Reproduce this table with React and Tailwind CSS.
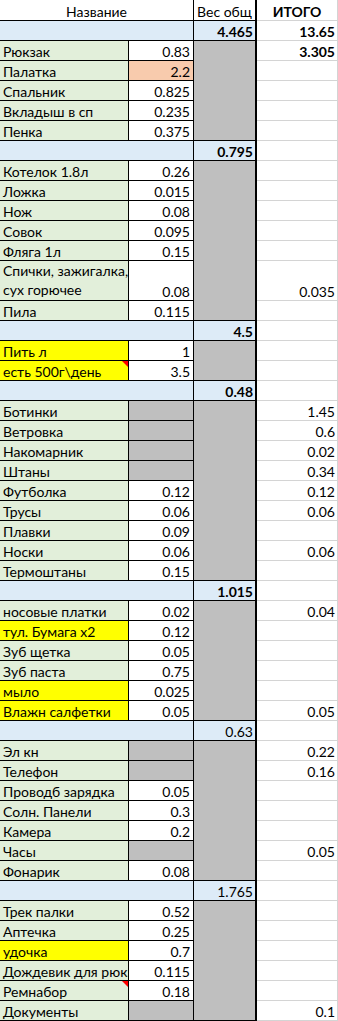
const nameBg = {
  green: "bg-[#e2efda]",
  yellow: "bg-[#ffff00]",
};

const weightBg = {
  white: "bg-white",
  gray: "bg-[#bfbfbf]",
  orange: "bg-[#f8cbad]",
};

const spans = {
  2: "row-span-2",
  5: "row-span-5",
  6: "row-span-6",
  7: "row-span-7",
  8: "row-span-8",
  9: "row-span-9",
};

const groups = [
  {
    total: "4.465",
    bold: true,
    sum: "13.65",
    items: [
      { name: "Рюкзак", w: "0.83", d: "3.305", dBold: true },
      { name: "Палатка", w: "2.2", wb: "orange" },
      { name: "Спальник", w: "0.825" },
      { name: "Вкладыш в сп", w: "0.235" },
      { name: "Пенка", w: "0.375" },
    ],
  },
  {
    total: "0.795",
    bold: true,
    items: [
      { name: "Котелок 1.8л", w: "0.26" },
      { name: "Ложка", w: "0.015" },
      { name: "Нож", w: "0.08" },
      { name: "Совок", w: "0.095" },
      { name: "Фляга 1л", w: "0.15" },
      { name: ["Спички, зажигалка,", "сух горючее"], w: "0.08", d: "0.035", tall: true },
      { name: "Пила", w: "0.115" },
    ],
  },
  {
    total: "4.5",
    bold: true,
    items: [
      { name: "Пить л", w: "1", nb: "yellow" },
      { name: "есть 500г\\день", w: "3.5", nb: "yellow", note: true },
    ],
  },
  {
    total: "0.48",
    bold: true,
    items: [
      { name: "Ботинки", wb: "gray", d: "1.45" },
      { name: "Ветровка", wb: "gray", d: "0.6" },
      { name: "Накомарник", wb: "gray", d: "0.02" },
      { name: "Штаны", wb: "gray", d: "0.34" },
      { name: "Футболка", w: "0.12", d: "0.12" },
      { name: "Трусы", w: "0.06", d: "0.06" },
      { name: "Плавки", w: "0.09" },
      { name: "Носки", w: "0.06", d: "0.06" },
      { name: "Термоштаны", w: "0.15" },
    ],
  },
  {
    total: "1.015",
    bold: true,
    items: [
      { name: "носовые платки", w: "0.02", d: "0.04" },
      { name: "тул. Бумага х2", w: "0.12", nb: "yellow" },
      { name: "Зуб щетка", w: "0.05" },
      { name: "Зуб паста", w: "0.75" },
      { name: "мыло", w: "0.025", nb: "yellow" },
      { name: "Влажн салфетки", w: "0.05", d: "0.05", nb: "yellow" },
    ],
  },
  {
    total: "0.63",
    items: [
      { name: "Эл кн", wb: "gray", d: "0.22" },
      { name: "Телефон", wb: "gray", d: "0.16" },
      { name: "Проводб зарядка", w: "0.05" },
      { name: "Солн. Панели", w: "0.3" },
      { name: "Камера", w: "0.2" },
      { name: "Часы", wb: "gray", d: "0.05" },
      { name: "Фонарик", w: "0.08" },
    ],
  },
  {
    total: "1.765",
    items: [
      { name: "Трек палки", w: "0.52" },
      { name: "Аптечка", w: "0.25" },
      { name: "удочка", w: "0.7", nb: "yellow" },
      { name: "Дождевик для рюкзака", w: "0.115" },
      { name: "Ремнабор", w: "0.18", note: true },
      { name: "Документы", wb: "gray", d: "0.1" },
    ],
  },
];

function Note() {
  return (
    <svg className="absolute top-0 right-0" width="6" height="6" viewBox="0 0 6 6">
      <polygon points="0,0 6,0 6,6" fill="#ff0000" />
    </svg>
  );
}

function Group({ g }) {
  const rows = g.items.reduce((n, it) => n + (it.tall ? 2 : 1), 0);
  return (
    <>
      {/* group total row */}
      <div className="col-start-1 col-span-2 bg-[#ddebf7] border-r border-b border-black" />
      <div
        className={`col-start-3 bg-[#ddebf7] border-r-2 border-b border-black flex items-end justify-end pr-[2px] ${
          g.bold ? "font-bold" : ""
        }`}
      >
        {g.total}
      </div>
      <div className="col-start-4 border-r border-b border-[#d4d4d4] flex items-end justify-end pr-[2px] font-bold">
        {g.sum || ""}
      </div>

      {g.items.map((it, i) => (
        <Item key={i} it={it} first={i === 0} span={spans[rows]} />
      ))}
    </>
  );
}

function Item({ it, first, span }) {
  const tall = it.tall ? "row-span-2" : "";
  return (
    <>
      <div
        className={`col-start-1 ${tall} ${nameBg[it.nb || "green"]} relative border-r border-b border-black pl-[3px] flex items-end overflow-hidden whitespace-nowrap`}
      >
        {Array.isArray(it.name) ? (
          <span className="leading-[19px] pb-[1px]">
            {it.name[0]}
            <br />
            {it.name[1]}
          </span>
        ) : (
          it.name
        )}
        {it.note && <Note />}
      </div>
      <div
        className={`col-start-2 ${tall} ${weightBg[it.wb || "white"]} border-r border-b border-black flex items-end justify-end pr-[3px]`}
      >
        {it.w || ""}
      </div>
      {first && <div className={`col-start-3 ${span} bg-[#bfbfbf] border-r-2 border-b border-black`} />}
      <div
        className={`col-start-4 ${tall} border-r border-b border-[#d4d4d4] flex items-end justify-end pr-[2px] ${
          it.dBold ? "font-bold" : ""
        }`}
      >
        {it.d || ""}
      </div>
    </>
  );
}

export default function App() {
  return (
    <div className="w-[338px] bg-white text-black font-['Lato',sans-serif] text-[14px] leading-[17px]">
      <div className="grid grid-cols-[129px_65px_63px_81px] grid-rows-[21px] auto-rows-[20px]">
        {/* HEADER */}
        <div className="col-start-1 col-span-2 border-r border-b border-black flex items-end justify-center">
          Название
        </div>
        <div className="col-start-3 border-r-2 border-b border-black flex items-end justify-center">
          Вес общ
        </div>
        <div className="col-start-4 border-r border-b border-[#d4d4d4] flex items-end justify-center font-bold">
          ИТОГО
        </div>

        {groups.map((g, i) => (
          <Group key={i} g={g} />
        ))}
      </div>
    </div>
  );
}
